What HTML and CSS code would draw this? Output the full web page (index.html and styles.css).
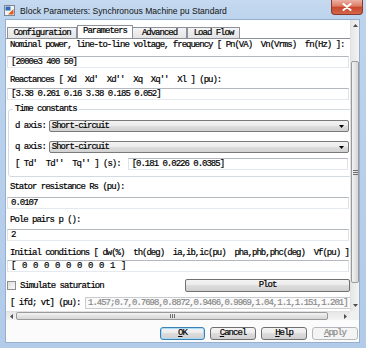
FILE: index.html
```html
<!DOCTYPE html>
<html>
<head>
<meta charset="utf-8">
<title>Block Parameters</title>
<link rel="stylesheet" href="styles.css">
</head>
<body>
<div class="window">
  <div class="titlebar">
    <svg class="appicon" width="11" height="11" viewBox="0 0 11 11">
      <rect x="0.5" y="0.5" width="10" height="10" fill="#f4f4f4" stroke="#7a8899"/>
      <rect x="1.5" y="1.5" width="5" height="4" fill="#2f6db5"/>
      <path d="M4 9.5 L9.5 4 L9.5 9.5 Z" fill="#e2581f"/>
    </svg>
    <span class="title">Block Parameters: Synchronous Machine pu Standard</span>
    <div class="close">
      <svg width="10" height="8" viewBox="0 0 10 8"><path d="M1.5 1 L8.5 7 M8.5 1 L1.5 7" stroke="#fff" stroke-width="2" stroke-linecap="round"/></svg>
    </div>
  </div>
  <div class="client">
    <div class="scroller">
      <div class="content">
        <div class="tabs">
          <div class="tab t-config">Configuration</div>
          <div class="tab t-params active">Parameters</div>
          <div class="tab t-adv">Advanced</div>
          <div class="tab t-load">Load Flow</div>
        </div>
        <div class="panel">
          <div class="label mt1">Nominal power, line-to-line voltage, frequency [ Pn(VA)  Vn(Vrms)  fn(Hz) ]:</div>
          <div class="field mt6">[2000e3 400 50]</div>
          <div class="label mt7">Reactances [ Xd  Xd'  Xd''  Xq  Xq''  Xl ] (pu):</div>
          <div class="field mt3">[3.38 0.261 0.16 3.38 0.185 0.052]</div>
          <fieldset class="group">
            <legend>Time constants</legend>
            <div class="grow mt6">
              <span class="glabel">d axis:</span>
              <div class="select"><span>Short-circuit</span><svg class="caret" width="5" height="3" viewBox="0 0 5 3"><path d="M0 0h5L2.5 3z"/></svg></div>
            </div>
            <div class="grow mt9">
              <span class="glabel">q axis:</span>
              <div class="select"><span>Short-circuit</span><svg class="caret" width="5" height="3" viewBox="0 0 5 3"><path d="M0 0h5L2.5 3z"/></svg></div>
            </div>
            <div class="grow mt5">
              <span class="glabel">[ Td'  Td''  Tq'' ] (s):</span>
              <div class="field tfield">[0.181 0.0226 0.0385]</div>
            </div>
          </fieldset>
          <div class="label mt5">Stator resistance Rs (pu):</div>
          <div class="field mt5">0.0107</div>
          <div class="label mt6">Pole pairs p ():</div>
          <div class="field mt4">2</div>
          <div class="label mt7">Initial conditions [ dw(%)  th(deg)  ia,ib,ic(pu)  pha,phb,phc(deg)  Vf(pu) ]</div>
          <div class="field mt2 spaced">[ 0 0 0 0 0 0 0 0 1 ]</div>
          <div class="checkrow mt7">
            <span class="checkbox"></span>
            <span class="checklabel">Simulate saturation</span>
            <div class="btn plot">Plot</div>
          </div>
          <div class="ifdrow mt5">
            <span class="ifdlabel">[ ifd; vt] (pu):</span>
            <div class="field disabled">1.457;0.7,0.7698,0.8872,0.9466,0.9969,1.04,1.1,1.151,1.201]</div>
          </div>
        </div>
      </div>
      <div class="vscroll">
        <div class="sb-btn"><svg width="5" height="3" viewBox="0 0 5 3"><path d="M0 3h5L2.5 0z" fill="#4d4d4d"/></svg></div>
        <div class="vtrack"><div class="vthumb"><span class="vgrip"></span></div></div>
        <div class="sb-btn"><svg width="5" height="3" viewBox="0 0 5 3"><path d="M0 0h5L2.5 3z" fill="#4d4d4d"/></svg></div>
      </div>
      <div class="hscroll">
        <div class="sb-btn h"><svg width="3" height="5" viewBox="0 0 3 5"><path d="M3 0v5L0 2.5z" fill="#4d4d4d"/></svg></div>
        <div class="htrack"><div class="hthumb"><span class="hgrip"></span></div></div>
        <div class="sb-btn h"><svg width="3" height="5" viewBox="0 0 3 5"><path d="M0 0v5L3 2.5z" fill="#4d4d4d"/></svg></div>
      </div>
      <div class="corner"></div>
    </div>
    <div class="buttons">
      <div class="btn dlg ok"><u>O</u>K</div>
      <div class="btn dlg"><u>C</u>ancel</div>
      <div class="btn dlg"><u>H</u>elp</div>
      <div class="btn dlg off"><u>A</u>pply</div>
    </div>
  </div>
</div>
</body>
</html>
```

FILE: styles.css
```css
* { box-sizing: border-box; }
html, body { margin: 0; padding: 0; }
body {
  width: 366px;
  height: 348px;
  overflow: hidden;
  background: #fff;
  font-family: "Liberation Mono", monospace;
  font-size: 9px;
  letter-spacing: -1px;
  color: #000;
  -webkit-text-stroke: 0.2px #000;
}

.window {
  width: 366px;
  height: 348px;
  display: flex;
  flex-direction: column;
  background: linear-gradient(#c6daf0, #bcd3ed 20px, #b2cbe9);
}

/* title bar */
.titlebar {
  height: 20px;
  flex: none;
  display: flex;
  align-items: flex-start;
}
.appicon { margin: 5px 0 0 4px; flex: none; }
.title {
  font-family: "Liberation Sans", sans-serif;
  font-size: 8.6px;
  letter-spacing: 0;
  line-height: 11px;
  margin: 6px 0 0 5px;
  color: #141414;
  -webkit-text-stroke: 0;
}
.close {
  margin-left: auto;
  margin-right: 3px;
  width: 32px;
  height: 15px;
  border: 1px solid #8a3a2c;
  border-top: none;
  border-radius: 0 0 4px 4px;
  background: linear-gradient(#ecb1a3, #dc7a63 45%, #c8452a 50%, #d4674c);
  display: flex;
  align-items: center;
  justify-content: center;
}

/* client */
.client {
  flex: 1;
  margin: 0 7px 6px 6px;
  background: #fbfbfb;
  display: flex;
  flex-direction: column;
  box-shadow: 0 0 0 1px #97afcf;
}
.scroller {
  flex: none;
  display: grid;
  grid-template-columns: 344px 9px;
  grid-template-rows: 291px 9px;
}
.content {
  overflow: hidden;
  background: #fff;
}

/* tabs */
.tabs {
  height: 18px;
  padding: 5px 0 0 1px;
  display: flex;
  align-items: flex-end;
}
.tab {
  height: 11px;
  line-height: 10px;
  text-align: center;
  border: 1px solid #8d9199;
  border-bottom: none;
  background: linear-gradient(#f4f4f4, #e4e4e4);
  white-space: pre;
}
.tab + .tab { border-left: none; }
.t-config { width: 70px; }
.t-params { width: 56px; }
.t-adv { width: 54px; }
.t-load { width: 53px; border-left: 1px solid #8d9199 !important; }
.tab.active {
  height: 13px;
  line-height: 11px;
  background: #fff;
  border-left: 1px solid #8d9199;
}

/* panel */
.panel {
  width: 346px;
  border-top: 1px solid #8d9199;
  display: flex;
  flex-direction: column;
}
.label {
  height: 10px;
  line-height: 10px;
  padding-left: 4px;
  white-space: pre;
}
.field {
  width: 342px;
  height: 12px;
  line-height: 10px;
  margin-left: 1px;
  padding: 0 3px;
  border: 1px solid;
  border-color: #b3b7be #dde2e8 #e3e9ef #dde2e8;
  background: #fff;
  white-space: pre;
  overflow: hidden;
  flex: none;
}
.spaced { word-spacing: 2.2px; }

.mt1 { margin-top: 1px; }
.mt2 { margin-top: 2px; }
.mt3 { margin-top: 3px; }
.mt4 { margin-top: 4px; }
.mt5 { margin-top: 5px; }
.mt6 { margin-top: 6px; }
.mt7 { margin-top: 7px; }
.mt9 { margin-top: 9px; }

/* group box */
.group {
  margin: 4px 0 0 2px;
  padding: 0 2px 6px 6px;
  border: 1px solid #d3dbe2;
  border-radius: 3px;
  min-width: 0;
}
.group legend {
  padding: 0 2px;
  margin-left: -2px;
  height: 10px;
  line-height: 10px;
  white-space: pre;
}
.grow {
  height: 12px;
  display: flex;
  align-items: center;
}
.glabel { white-space: pre; flex: none; }
.select {
  flex: 1;
  height: 12px;
  margin-left: 3px;
  border: 1px solid #7a7a7a;
  border-radius: 2px;
  background: linear-gradient(#f3f3f3, #ebebeb 50%, #dedede 50%, #d2d2d2);
  display: flex;
  align-items: center;
  padding: 0 4px 0 2px;
  line-height: 10px;
}
.caret { margin-left: auto; fill: #000; }
.tfield {
  width: auto;
  flex: 1;
  margin-left: 7px;
  margin-right: 1px;
}

/* checkbox + plot */
.checkrow {
  height: 13px;
  display: flex;
  align-items: center;
}
.checkbox {
  width: 9px;
  height: 9px;
  margin-left: 1px;
  border: 1px solid #8e8f8f;
  background: linear-gradient(135deg, #dcdcdc, #fbfbfb);
  flex: none;
}
.checklabel { margin-left: 4px; white-space: pre; }
.btn {
  height: 13px;
  border: 1px solid #707070;
  border-radius: 2px;
  background: linear-gradient(#f3f3f3, #ebebeb 50%, #dddddd 50%, #cfcfcf);
  text-align: center;
  line-height: 11px;
  white-space: pre;
}
.plot {
  margin-left: auto;
  margin-right: 2px;
  width: 165px;
}

/* ifd row */
.ifdrow {
  height: 12px;
  display: flex;
  align-items: center;
}
.ifdlabel { padding-left: 4px; white-space: pre; flex: none; width: 79px; }
.field.disabled {
  width: auto;
  flex: 1;
  margin-left: 0;
  padding: 0 2px;
  color: #8a8a8a;
  -webkit-text-stroke: 0.2px #8a8a8a;
  background: #fafafa;
  border-color: #c9cbcf;
}

/* scrollbars */
.vscroll {
  display: flex;
  flex-direction: column;
  background: linear-gradient(90deg, #e6e6e6, #f3f3f3);
  border-left: 1px solid #e0e0e0;
}
.sb-btn {
  height: 11px;
  flex: none;
  display: flex;
  align-items: center;
  justify-content: center;
}
.sb-btn.h { width: 10px; height: auto; }
.vtrack { flex: 1; display: flex; flex-direction: column; }
.vthumb {
  margin-top: 30px;
  height: 222px;
  border: 1px solid #9a9a9a;
  border-radius: 2px;
  background: linear-gradient(90deg, #f4f4f4, #e3e3e3 50%, #d6d6d6);
  display: flex;
  align-items: center;
  justify-content: center;
}
.vgrip {
  width: 5px;
  height: 5px;
  background: repeating-linear-gradient(#6f6f6f 0 1px, transparent 1px 2px);
}
.hscroll {
  display: flex;
  background: linear-gradient(#e6e6e6, #f3f3f3);
  border-top: 1px solid #e0e0e0;
}
.htrack { flex: 1; display: flex; }
.hthumb {
  width: 312px;
  border: 1px solid #9a9a9a;
  border-radius: 2px;
  background: linear-gradient(#f4f4f4, #e3e3e3 50%, #d6d6d6);
  display: flex;
  align-items: center;
  justify-content: center;
}
.hgrip {
  width: 5px;
  height: 4px;
  background: repeating-linear-gradient(90deg, #6f6f6f 0 1px, transparent 1px 2px);
}
.corner { background: #f0f0f0; }

/* dialog buttons */
.buttons {
  flex: 1;
  display: flex;
  justify-content: flex-end;
  align-items: flex-start;
  gap: 5px;
  padding: 7px 1px 0 0;
}
.dlg { width: 46px; border-radius: 3px; }
.dlg.ok {
  width: 45px;
  border-color: #3c7fb1;
  box-shadow: inset 0 0 0 1px #a8dcf7;
}
.dlg.off {
  border-color: #b5b9bd;
  background: #f4f4f4;
  color: #8a8a8a;
  -webkit-text-stroke: 0.2px #8a8a8a;
}
```
